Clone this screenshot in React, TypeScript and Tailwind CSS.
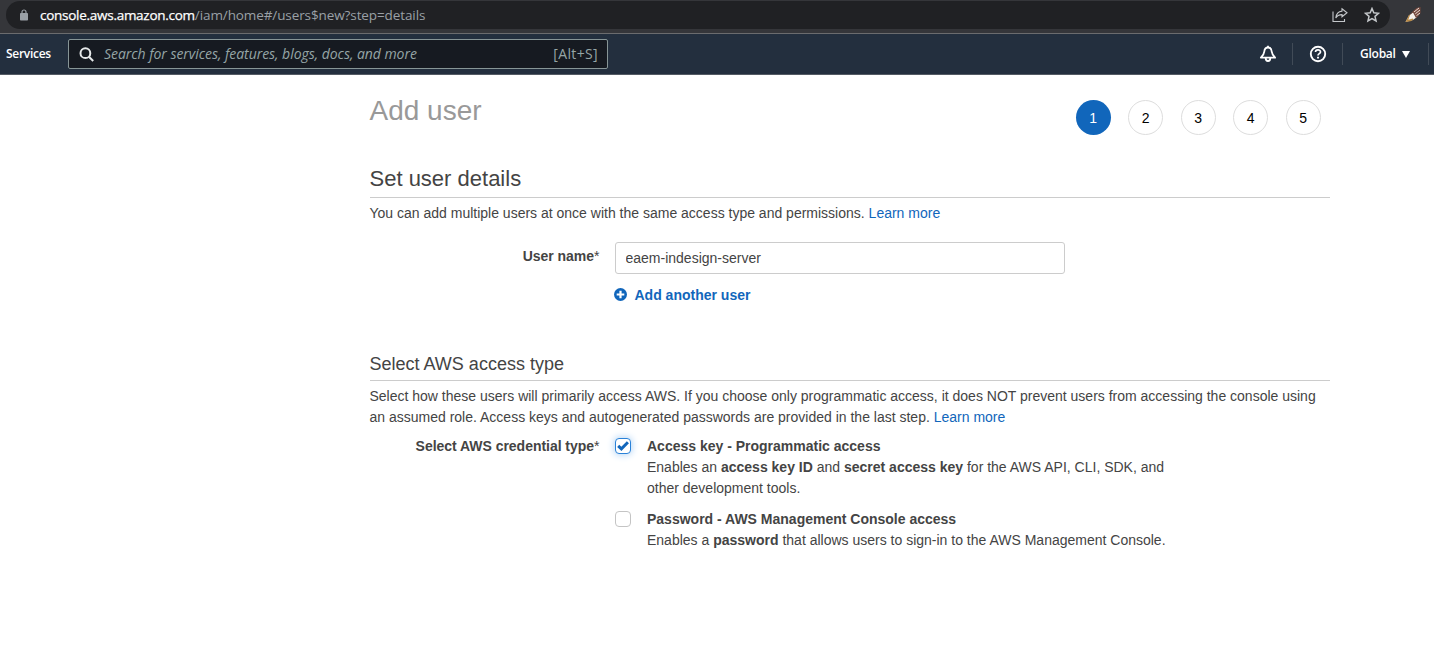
import type { ReactNode } from "react";

const STEPS = [1, 2, 3, 4, 5];

function BrowserBar() {
  return (
    <div className="flex h-[34px] items-start border-b border-[#6b6c6e] bg-[#35363a]">
      <div className="ml-1.5 flex h-7 w-[1384px] mt-[1px] items-center rounded-full bg-[#202124] pl-3.5 pr-[10px]">
        <svg width="8" height="12" viewBox="0 0 8 12" className="mb-[1px] shrink-0">
          <path d="M2 5V3a2 2 0 0 1 4 0v2" fill="none" stroke="#9aa0a6" strokeWidth="1.2" />
          <rect x="0" y="4" width="8" height="7.5" rx="0.8" fill="#9aa0a6" />
        </svg>
        <div className="ml-3 flex-1 whitespace-nowrap font-['Open_Sans',sans-serif] text-[13.5px] leading-7 text-[#9aa0a6]">
          <span className="tracking-[-0.27px] text-white [-webkit-text-stroke:0.25px_#fff]">console.aws.amazon.com</span>
          <span className="tracking-[-0.1px]">/iam/home#/users$new?step=details</span>
        </div>
        <svg width="16" height="16" viewBox="0 0 16 16" fill="none" stroke="#c4c7ca" strokeWidth="1.1" className="mr-4">
          <path d="M1 4.500v10h11.500v-2.500" />
          <path d="M10 1.800l5 4-5 4V7.600C7 7.600 5 8.700 3.800 11 4.200 7 6.200 4.500 10 4.100z" />
        </svg>
        <svg width="16" height="16" viewBox="0 0 15 15" fill="none" stroke="#c4c7ca" strokeWidth="1.4">
          <path d="M7.500 1.400l1.700 4.100 4.400.4-3.300 2.900 1 4.300-3.800-2.300-3.800 2.300 1-4.300L1.400 5.900l4.400-.4z" />
        </svg>
      </div>
      <svg width="16" height="16" viewBox="0 0 16 16" className="ml-[15px] mt-[7px]">
        <path d="M.5 15L4 8.500 8.500 5l3.500 5-4 3z" fill="#f4efea" />
        <path d="M.5 15L4 8l1.200-.4L3.300 12.700l4.500-1.200.6 1.200L5.500 14.200z" fill="#b98a45" />
        <path d="M4.200 8.200L8 4l3.500-3 4-1v6l-2 3-2.500 2L8 5.500z" fill="#75483c" />
        <path d="M9 5l5-4M10.300 6.800L15 3M11.500 8.600L15 6" stroke="#eee0da" strokeWidth="1" />
      </svg>
    </div>
  );
}

function NavBar() {
  return (
    <div className="flex h-[41px] items-center border-b border-[#545b64] bg-[#232f3e] font-['Open_Sans',sans-serif] text-white">
      <span className="w-[62px] shrink-0 pl-1.5 text-xs font-semibold tracking-[-0.28px]">Services</span>
      <div className="ml-1.5 flex h-[30px] w-[540px] items-center rounded-[2px] border border-[#879596] bg-[#161a21] pl-2.5 pr-[9px] text-sm text-[#95a5a6]">
        <svg width="15" height="15" viewBox="0 0 15 15" fill="none" stroke="#e6e9ea" strokeWidth="2">
          <circle cx="6.400" cy="6.200" r="4.900" />
          <path d="M9.900 9.700l4.300 4.300" />
        </svg>
        <span className="ml-2.5 flex-1 whitespace-nowrap italic tracking-[-0.045px]">Search for services, features, blogs, docs, and more</span>
        <span className="tracking-[0.35px]">[Alt+S]</span>
      </div>
      <div className="ml-auto flex items-center">
        <svg width="18" height="18" viewBox="0 0 18 18" fill="none" stroke="#fff" strokeWidth="1.800" strokeLinejoin="round" className="mr-[15px]">
          <path d="M9 2.500C6.600 2.500 5.500 4.300 5.300 6.500 5.100 8.900 4.300 10.200 1.900 12.700h14.200c-2.400-2.500-3.200-3.800-3.400-6.200C12.500 4.300 11.400 2.500 9 2.500z" />
          <path d="M9 .7v2M6.700 13c0 4 4.600 4 4.600 0" />
        </svg>
        <span className="h-[22px] w-px bg-[#414b57]" />
        <svg width="18" height="18" viewBox="0 0 18 18" fill="none" stroke="#fff" strokeWidth="1.900" className="ml-4 mr-[15px]">
          <circle cx="9" cy="9" r="7.200" />
          <path d="M6.500 7.100c0-3 5-3 5-.2 0 1.800-2.500 1.700-2.500 3.600" strokeWidth="1.700" />
          <path d="M9 11.800v1.800" strokeWidth="1.900" />
        </svg>
        <span className="h-[22px] w-px bg-[#414b57]" />
        <span className="ml-[17px] w-[36px] text-xs font-semibold tracking-[-0.25px]">Global</span>
        <svg width="8" height="7" viewBox="0 0 8 7" className="ml-1.5 mr-[18px]">
          <path d="M0 0h8L4 7z" fill="#fff" />
        </svg>
        <span className="h-[22px] w-px bg-[#414b57]" />
        <span className="w-[5px]" />
      </div>
    </div>
  );
}

function Link({ children }: { children: ReactNode }) {
  return <a href="#" className="text-[#1166bb]">{children}</a>;
}

function FieldLabel({ children }: { children: ReactNode }) {
  return (
    <div className="w-[245px] shrink-0 whitespace-nowrap pr-[15px] text-right">
      <b className="tracking-[-0.03px]">{children}</b>*
    </div>
  );
}

function Checkbox({ checked = false }: { checked?: boolean }) {
  return (
    <span
      role="checkbox"
      aria-checked={checked}
      className={
        checked
          ? "mt-[2px] flex size-4 shrink-0 items-center justify-center rounded-[4px] border border-[#2a82d8] bg-white shadow-[0_0_7px_1px_#b5d6f6]"
          : "mt-[2px] size-4 shrink-0 rounded-[4px] border border-[#c4c4c4] bg-white"
      }
    >
      {checked && (
        <svg width="12" height="10" viewBox="0 0 12 10" fill="none" stroke="#1166bb" strokeWidth="3">
          <path d="M1.200 4.800l3.200 3L10.900 1.300" />
        </svg>
      )}
    </span>
  );
}

export default function App() {
  return (
    <div className="min-h-[661px] bg-white">
      <BrowserBar />
      <NavBar />
      <main className="ml-[369.5px] w-[960px] font-['Liberation_Sans',Arial,sans-serif] text-sm leading-[21px] text-[#444]">
        <div className="flex h-[89px] justify-between pt-[18px]">
          <h1 className="pt-px text-[28px] leading-[34px] text-[#999]">Add user</h1>
          <ol className="mr-[8.9px] mt-[7px] flex gap-[17.5px]">
            {STEPS.map((step) => (
              <li
                key={step}
                className={
                  step === 1
                    ? "flex size-[35px] items-center justify-center rounded-full bg-[#1166bb] pt-0.5 text-white"
                    : "flex size-[35px] items-center justify-center rounded-full border border-[#ddd] pt-0.5 text-black"
                }
              >
                {step}
              </li>
            ))}
          </ol>
        </div>

        <section className="h-[188px]">
          <h2 className="h-[34px] border-b border-[#ccc] pt-px text-[22px] leading-7">Set user details</h2>
          <p className="mt-[5px]">
            You can add multiple users at once with the same access type and permissions. <Link>Learn more</Link>
          </p>
          <div className="mt-[18px] flex">
            <div className="pt-1">
              <FieldLabel>User name</FieldLabel>
            </div>
            <div>
              <input
                className="block h-8 w-[450px] rounded-[3px] border border-[#ccc] px-2.5 text-sm text-[#444] outline-none"
                defaultValue="eaem-indesign-server"
              />
              <a href="#" className="mt-[11px] flex items-center font-bold text-[#1166bb]">
                <svg width="13" height="13" viewBox="0 0 13 13" className="-ml-[0.5px] mb-[3px] mr-[7.5px]">
                  <circle cx="6.500" cy="6.500" r="6.500" fill="#1166bb" />
                  <path d="M6.500 2.700v7.600M2.700 6.500h7.600" stroke="#fff" strokeWidth="2.200" />
                </svg>
                Add another user
              </a>
            </div>
          </div>
        </section>

        <section>
          <h3 className="h-[29px] border-b border-[#ccc] text-lg leading-6">Select AWS access type</h3>
          <p className="mt-[5px]">
            Select how these users will primarily access AWS. If you choose only programmatic access, it does NOT prevent users from accessing the console using
            <br />
            an assumed role. Access keys and autogenerated passwords are provided in the last step. <Link>Learn more</Link>
          </p>
          <div className="mt-2 flex">
            <FieldLabel>Select AWS credential type</FieldLabel>
            <div className="flex flex-col gap-2.5">
              <div className="flex gap-[16.5px]">
                <Checkbox checked />
                <div>
                  <b>Access key - Programmatic access</b>
                  <p>
                    Enables an <b>access key ID</b> and <b>secret access key</b> for the AWS API, CLI, SDK, and
                    <br />
                    other development tools.
                  </p>
                </div>
              </div>
              <div className="flex gap-[16.5px]">
                <Checkbox />
                <div>
                  <b>Password - AWS Management Console access</b>
                  <p>
                    Enables a <b>password</b> that allows users to sign-in to the AWS Management Console.
                  </p>
                </div>
              </div>
            </div>
          </div>
        </section>
      </main>
    </div>
  );
}
